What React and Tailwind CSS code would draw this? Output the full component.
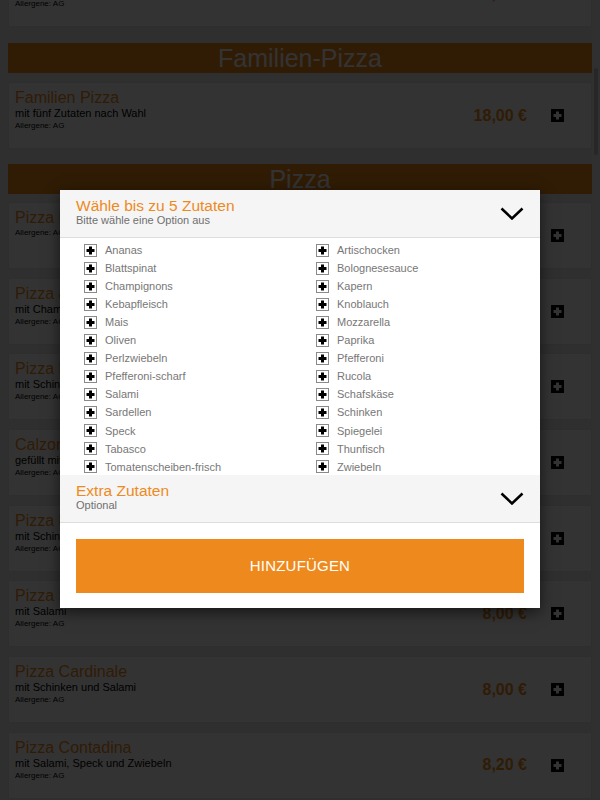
const ORANGE = '#ee8a1d';

const left = ['Ananas', 'Blattspinat', 'Champignons', 'Kebapfleisch', 'Mais', 'Oliven', 'Perlzwiebeln', 'Pfefferoni-scharf', 'Salami', 'Sardellen', 'Speck', 'Tabasco', 'Tomatenscheiben-frisch'];
const right = ['Artischocken', 'Bolognesesauce', 'Kapern', 'Knoblauch', 'Mozzarella', 'Paprika', 'Pfefferoni', 'Rucola', 'Schafskäse', 'Schinken', 'Spiegelei', 'Thunfisch', 'Zwiebeln'];
const zutaten = left.flatMap((l, i) => [l, right[i]]);

const pizzas = [
  { name: 'Pizza Margherita', price: '6,50 €' },
  { name: 'Pizza ai Funghi', desc: 'mit Champignons', price: '7,50 €' },
  { name: 'Pizza Prosciutto', desc: 'mit Schinken', price: '7,50 €' },
  { name: 'Calzone', desc: 'gefüllt mit Schinken und Champignons', price: '9,00 €' },
  { name: 'Pizza Hawaii', desc: 'mit Schinken und Ananas', price: '8,00 €' },
  { name: 'Pizza Salami', desc: 'mit Salami', price: '8,00 €' },
  { name: 'Pizza Cardinale', desc: 'mit Schinken und Salami', price: '8,00 €' },
  { name: 'Pizza Contadina', desc: 'mit Salami, Speck und Zwiebeln', price: '8,20 €' },
];

function AddIcon() {
  return (
    <svg width="13" height="13" viewBox="0 0 13 13">
      <rect width="13" height="13" fill="#000" />
      <path d="M6.5 2.5v8M2.5 6.5h8" stroke="#fff" strokeWidth="3" />
    </svg>
  );
}

function CheckPlus() {
  return (
    <svg width="13" height="13" viewBox="0 0 13 13" className="shrink-0">
      <rect x="0.5" y="0.5" width="12" height="12" fill="#fff" stroke="#8a8a8a" />
      <path d="M6.5 2.5v8M2.5 6.5h8" stroke="#000" strokeWidth="3" />
    </svg>
  );
}

function Chevron() {
  return (
    <svg width="24" height="13" viewBox="0 0 24 13">
      <polyline points="1.5,1.5 12,11.5 22.5,1.5" fill="none" stroke="#000" strokeWidth="2.5" />
    </svg>
  );
}

function Card({ item, className = '' }) {
  return (
    <div className={`h-[67px] bg-white border border-[#e6e6e6] flex items-center ${className}`}>
      <div className="flex-1 self-start pt-[5px] pl-[6px]">
        <div className="text-[16px] leading-[19px]" style={{ color: ORANGE }}>{item.name}</div>
        {item.desc && <div className="text-[11px] leading-[13px] text-black">{item.desc}</div>}
        <div className="text-[8px] leading-[10px] text-black mt-[1px]">Allergene: AG</div>
      </div>
      <div className="text-[16px] font-bold" style={{ color: ORANGE }}>{item.price}</div>
      <div className="ml-[24px] mr-[27px] flex">
        <AddIcon />
      </div>
    </div>
  );
}

function SectionHeader({ title }) {
  return (
    <div className="h-[30px] bg-[#ee8a1d] text-white text-[25px] leading-[30px] text-center">{title}</div>
  );
}

function Panel({ title, sub }) {
  return (
    <div className="h-[48px] bg-[#f5f5f5] border-b border-[#dddddd] flex items-center pl-[16px] pr-[16px]">
      <div className="flex-1 self-start pt-[8px]">
        <div className="text-[15.5px] leading-[16px]" style={{ color: ORANGE }}>{title}</div>
        <div className="text-[11px] leading-[12px] text-[#6f6f6f]">{sub}</div>
      </div>
      <Chevron />
    </div>
  );
}

export default function App() {
  return (
    <div className="relative h-[800px] w-[600px] overflow-hidden bg-[#ececec] font-['Liberation_Sans',Arial,sans-serif]">
      <div className="flex">
        <div className="flex-1 pl-[8px]">
          <Card item={{ name: 'Pizza Bambini', desc: 'mit Schinken', price: '5,50 €' }} className="-mt-[40px]" />
          <div className="mt-[16px]">
            <SectionHeader title="Familien-Pizza" />
          </div>
          <Card item={{ name: 'Familien Pizza', desc: 'mit fünf Zutaten nach Wahl', price: '18,00 €' }} className="mt-[9px]" />
          <div className="mt-[15px]">
            <SectionHeader title="Pizza" />
          </div>
          <div className="mt-[8px] flex flex-col gap-[8.7px]">
            {pizzas.map((p) => (
              <Card key={p.name} item={p} />
            ))}
          </div>
        </div>
        <div className="w-[8px] bg-[#f1f1f1] flex justify-center">
          <div className="mt-[68px] h-[87px] w-[4px] rounded-full bg-[#c1c1c1]" />
        </div>
      </div>

      {/* dim backdrop + dialog */}
      <div className="absolute inset-0 z-10 bg-black/80 pt-[190px]">
        <div className="mx-auto w-[480px] bg-white shadow-[0_4px_14px_rgba(0,0,0,0.6)]">
          <Panel title="Wähle bis zu 5 Zutaten" sub="Bitte wähle eine Option aus" />
          <div className="h-[237px] overflow-hidden pt-[3px] pl-[24px] grid grid-cols-[232px_1fr] auto-rows-[18.08px]">
            {zutaten.map((z) => (
              <div key={z} className="flex items-center gap-[8px]">
                <CheckPlus />
                <span className="text-[11px] text-[#777777]">{z}</span>
              </div>
            ))}
          </div>
          <Panel title="Extra Zutaten" sub="Optional" />
          <div className="px-[16px] pt-[16px] pb-[15px]">
            <button className="w-full h-[54px] bg-[#ee8a1d] text-white text-[15px] tracking-[0.2px]">HINZUFÜGEN</button>
          </div>
        </div>
      </div>
    </div>
  );
}
